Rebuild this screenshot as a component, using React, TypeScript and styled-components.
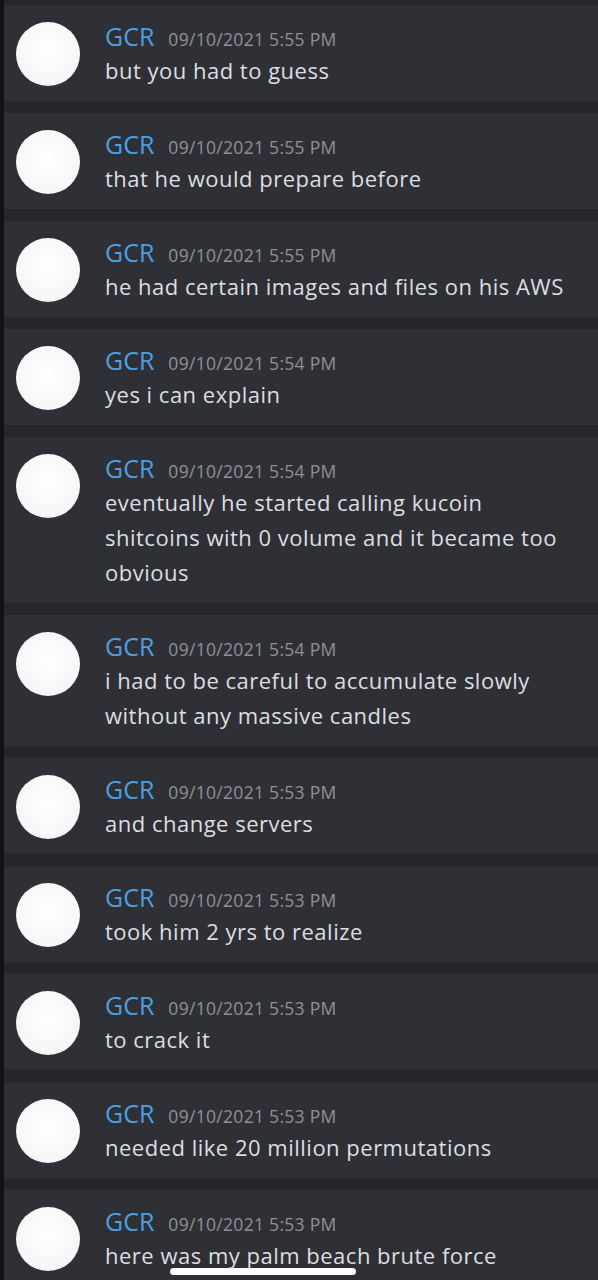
import styled, { createGlobalStyle } from "styled-components";

type Message = {
  time: string;
  lines: string[];
};

const messages: Message[] = [
  { time: "5:55 PM", lines: ["but you had to guess"] },
  { time: "5:55 PM", lines: ["that he would prepare before"] },
  { time: "5:55 PM", lines: ["he had certain images and files on his AWS"] },
  { time: "5:54 PM", lines: ["yes i can explain"] },
  {
    time: "5:54 PM",
    lines: [
      "eventually he started calling kucoin",
      "shitcoins with 0 volume and it became too",
      "obvious",
    ],
  },
  {
    time: "5:54 PM",
    lines: ["i had to be careful to accumulate slowly", "without any massive candles"],
  },
  { time: "5:53 PM", lines: ["and change servers"] },
  { time: "5:53 PM", lines: ["took him 2 yrs to realize"] },
  { time: "5:53 PM", lines: ["to crack it"] },
  { time: "5:53 PM", lines: ["needed like 20 million permutations"] },
  { time: "5:53 PM", lines: ["here was my palm beach brute force"] },
];

const GlobalStyle = createGlobalStyle`
  html, body {
    margin: 0;
    padding: 0;
    background: #26272b;
    overflow: hidden;
  }
  body {
    font-family: "Open Sans", "Noto Sans", sans-serif;
    -webkit-font-smoothing: antialiased;
  }
`;

const App = () => (
  <>
    <GlobalStyle />
    <Screen>
      <EdgeStrip />
      <Feed>
        {messages.map((m, i) => (
          <Card key={i}>
            <Avatar />
            <Body>
              <Header>
                <Author>GCR</Author>
                <Stamp>09/10/2021 {m.time}</Stamp>
              </Header>
              {m.lines.map((line, j) => (
                <Line key={j}>{line}</Line>
              ))}
            </Body>
          </Card>
        ))}
      </Feed>
      <HomeIndicator />
    </Screen>
  </>
);

export default App;

const Screen = styled.div`
  position: relative;
  display: flex;
  width: 598px;
  height: 1280px;
  overflow: hidden;
  background: #26272b;
`;

const EdgeStrip = styled.div`
  flex: 0 0 4px;
  background: #121215;
`;

const Feed = styled.div`
  flex: 1;
  display: flex;
  flex-direction: column;
  gap: 12px;
  padding-top: 5px;
`;

const Card = styled.div`
  display: flex;
  align-items: flex-start;
  background: #2f3035;
  padding: 14px 0 13px 12px;
`;

const Avatar = styled.div`
  flex: 0 0 64px;
  height: 64px;
  margin-top: 3px;
  border-radius: 50%;
  background: radial-gradient(circle at 50% 45%, #ffffff 0%, #f6f6f7 70%, #e9e9eb 100%);
`;

const Body = styled.div`
  display: flex;
  flex-direction: column;
  margin-left: 25px;
`;

const Header = styled.div`
  display: flex;
  align-items: baseline;
  height: 34px;
  line-height: 34px;
`;

const Author = styled.span`
  font-size: 25px;
  font-weight: 500;
  color: #4c9fe0;
`;

const Stamp = styled.span`
  margin-left: 14px;
  font-size: 17.5px;
  color: #8f9097;
  letter-spacing: 0.3px;
`;

const Line = styled.div`
  font-size: 22px;
  line-height: 35px;
  color: #dddee1;
  letter-spacing: 0.5px;
  white-space: nowrap;
`;

const HomeIndicator = styled.div`
  position: absolute;
  left: 170px;
  bottom: 5px;
  width: 186px;
  height: 7px;
  border-radius: 4px;
  background: #ffffff;
`;
